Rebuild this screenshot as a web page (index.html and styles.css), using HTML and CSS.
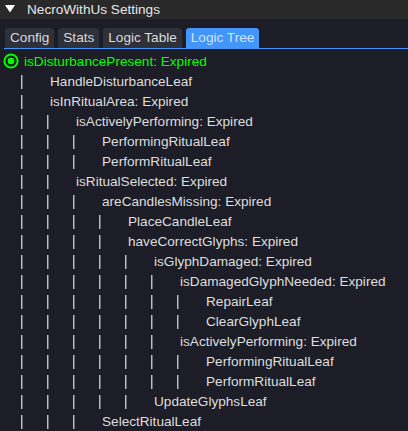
FILE: index.html
```html
<!DOCTYPE html>
<html>
<head>
<meta charset="utf-8">
<link rel="stylesheet" href="styles.css">
</head>
<body>
<div class="window">
  <div class="titlebar">
    <svg class="collapse" width="12" height="10" viewBox="0 0 12 10"><polygon points="0,0 10,0 5,7.5" fill="#ffffff"/></svg>
    <span class="title">NecroWithUs Settings</span>
  </div>
  <div class="content">
    <div class="tabbar">
      <div class="tab">Config</div>
      <div class="tab">Stats</div>
      <div class="tab">Logic Table</div>
      <div class="tab active">Logic Tree</div>
    </div>
    <div class="tree">
      <div class="row root">
        <svg class="radio" width="16" height="16" viewBox="0 0 16 16"><circle cx="8" cy="8" r="6.6" fill="none" stroke="#00ff00" stroke-width="2"/><circle cx="8" cy="8" r="3.3" fill="#00ff00"/></svg>
        <span class="label">isDisturbancePresent: Expired</span>
      </div>
      <div class="row"><span class="pipe"><span class="bar">|</span></span><span class="label">HandleDisturbanceLeaf</span></div>
      <div class="row"><span class="pipe"><span class="bar">|</span></span><span class="label">isInRitualArea: Expired</span></div>
      <div class="row"><span class="pipe"><span class="bar">|</span></span><span class="pipe"><span class="bar">|</span></span><span class="label">isActivelyPerforming: Expired</span></div>
      <div class="row"><span class="pipe"><span class="bar">|</span></span><span class="pipe"><span class="bar">|</span></span><span class="pipe"><span class="bar">|</span></span><span class="label">PerformingRitualLeaf</span></div>
      <div class="row"><span class="pipe"><span class="bar">|</span></span><span class="pipe"><span class="bar">|</span></span><span class="pipe"><span class="bar">|</span></span><span class="label">PerformRitualLeaf</span></div>
      <div class="row"><span class="pipe"><span class="bar">|</span></span><span class="pipe"><span class="bar">|</span></span><span class="label">isRitualSelected: Expired</span></div>
      <div class="row"><span class="pipe"><span class="bar">|</span></span><span class="pipe"><span class="bar">|</span></span><span class="pipe"><span class="bar">|</span></span><span class="label">areCandlesMissing: Expired</span></div>
      <div class="row"><span class="pipe"><span class="bar">|</span></span><span class="pipe"><span class="bar">|</span></span><span class="pipe"><span class="bar">|</span></span><span class="pipe"><span class="bar">|</span></span><span class="label">PlaceCandleLeaf</span></div>
      <div class="row"><span class="pipe"><span class="bar">|</span></span><span class="pipe"><span class="bar">|</span></span><span class="pipe"><span class="bar">|</span></span><span class="pipe"><span class="bar">|</span></span><span class="label">haveCorrectGlyphs: Expired</span></div>
      <div class="row"><span class="pipe"><span class="bar">|</span></span><span class="pipe"><span class="bar">|</span></span><span class="pipe"><span class="bar">|</span></span><span class="pipe"><span class="bar">|</span></span><span class="pipe"><span class="bar">|</span></span><span class="label">isGlyphDamaged: Expired</span></div>
      <div class="row"><span class="pipe"><span class="bar">|</span></span><span class="pipe"><span class="bar">|</span></span><span class="pipe"><span class="bar">|</span></span><span class="pipe"><span class="bar">|</span></span><span class="pipe"><span class="bar">|</span></span><span class="pipe"><span class="bar">|</span></span><span class="label">isDamagedGlyphNeeded: Expired</span></div>
      <div class="row"><span class="pipe"><span class="bar">|</span></span><span class="pipe"><span class="bar">|</span></span><span class="pipe"><span class="bar">|</span></span><span class="pipe"><span class="bar">|</span></span><span class="pipe"><span class="bar">|</span></span><span class="pipe"><span class="bar">|</span></span><span class="pipe"><span class="bar">|</span></span><span class="label">RepairLeaf</span></div>
      <div class="row"><span class="pipe"><span class="bar">|</span></span><span class="pipe"><span class="bar">|</span></span><span class="pipe"><span class="bar">|</span></span><span class="pipe"><span class="bar">|</span></span><span class="pipe"><span class="bar">|</span></span><span class="pipe"><span class="bar">|</span></span><span class="pipe"><span class="bar">|</span></span><span class="label">ClearGlyphLeaf</span></div>
      <div class="row"><span class="pipe"><span class="bar">|</span></span><span class="pipe"><span class="bar">|</span></span><span class="pipe"><span class="bar">|</span></span><span class="pipe"><span class="bar">|</span></span><span class="pipe"><span class="bar">|</span></span><span class="pipe"><span class="bar">|</span></span><span class="label">isActivelyPerforming: Expired</span></div>
      <div class="row"><span class="pipe"><span class="bar">|</span></span><span class="pipe"><span class="bar">|</span></span><span class="pipe"><span class="bar">|</span></span><span class="pipe"><span class="bar">|</span></span><span class="pipe"><span class="bar">|</span></span><span class="pipe"><span class="bar">|</span></span><span class="pipe"><span class="bar">|</span></span><span class="label">PerformingRitualLeaf</span></div>
      <div class="row"><span class="pipe"><span class="bar">|</span></span><span class="pipe"><span class="bar">|</span></span><span class="pipe"><span class="bar">|</span></span><span class="pipe"><span class="bar">|</span></span><span class="pipe"><span class="bar">|</span></span><span class="pipe"><span class="bar">|</span></span><span class="pipe"><span class="bar">|</span></span><span class="label">PerformRitualLeaf</span></div>
      <div class="row"><span class="pipe"><span class="bar">|</span></span><span class="pipe"><span class="bar">|</span></span><span class="pipe"><span class="bar">|</span></span><span class="pipe"><span class="bar">|</span></span><span class="pipe"><span class="bar">|</span></span><span class="label">UpdateGlyphsLeaf</span></div>
      <div class="row"><span class="pipe"><span class="bar">|</span></span><span class="pipe"><span class="bar">|</span></span><span class="pipe"><span class="bar">|</span></span><span class="label">SelectRitualLeaf</span></div>
    </div>
  </div>
</div>
</body>
</html>
```
FILE: styles.css
```css
html, body {
  margin: 0;
  padding: 0;
  background: #1c1d26;
}
body {
  width: 408px;
  height: 431px;
  overflow: hidden;
  font-family: "Liberation Sans", Arial, sans-serif;
  font-size: 13.6px;
  color: #dedede;
}
.window {
  display: flex;
  flex-direction: column;
}
.titlebar {
  height: 19px;
  background: #292929;
  display: flex;
  align-items: center;
  padding-left: 5px;
}
.collapse {
  display: block;
}
.title {
  margin-left: 10px;
  color: #e6e6e6;
  line-height: 19px;
}
.content {
  padding-top: 9px;
}
.tabbar {
  display: flex;
  gap: 4px;
  margin-left: 4px;
  padding-left: 1px;
  border-bottom: 1px solid #4296fa;
}
.tab {
  height: 20px;
  line-height: 20px;
  padding: 0 5px;
  background: #2e303a;
  border-radius: 3px 3px 0 0;
  color: #dadada;
}
.tab.active {
  background: #4296fa;
  color: #d4e2f5;
}
.tree {
  padding-top: 3px;
}
.row {
  display: flex;
  align-items: center;
  height: 20px;
  line-height: 20px;
  padding-left: 20px;
  white-space: nowrap;
}
.row.root {
  padding-left: 3px;
  color: #00ff00;
}
.radio {
  display: block;
  width: 16px;
  height: 16px;
  margin-right: 5px;
  margin-top: -2px;
}
.pipe {
  display: inline-block;
  width: 26px;
  height: 20px;
}
.bar {
  display: inline-block;
  color: #e4e4e4;
  transform: scaleY(1.08) translateZ(0);
  transform-origin: 50% 55%;
  will-change: transform;
}
.label {
  margin-left: 4px;
}
.root .label {
  margin-left: 0;
}
```
